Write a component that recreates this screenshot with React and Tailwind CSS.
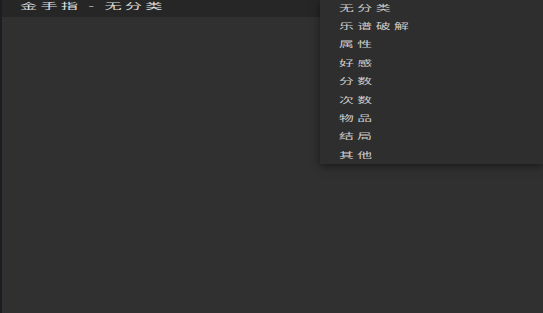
import React from 'react'

const items = ['无分类', '乐谱破解', '属性', '好感', '分数', '次数', '物品', '结局', '其他']

export default function App() {
  return (
    <div
      className="relative w-[543px] h-[313px] overflow-hidden bg-[#303030] flex"
      style={{ fontFamily: '"Noto Sans CJK SC", "Noto Sans", sans-serif' }}
    >
      <div className="w-[2px] bg-[#1c1d22]" />
      <div className="flex-1 flex flex-col">
        <div className="h-[17px] bg-[#262626] flex items-start pl-[18px] pt-[1px]">
          <span className="inline-block origin-top-left scale-x-[1.57] scale-y-[0.72] text-[11px] leading-[12px] tracking-[2px] text-[#dcdcdc] whitespace-nowrap">
            金手指 - 无分类
          </span>
        </div>
        <div className="flex-1" />
      </div>

      <div className="absolute left-[320px] top-0 w-[223px] h-[164px] bg-[#2e2e2e] shadow-[0_2px_8px_rgba(0,0,0,0.5)] pl-[19px]">
        <div className="-mt-[2px] flex flex-col">
          {items.map((t, i) => (
            <div key={i} className="h-[18.4px] flex items-center">
              <span className="inline-block origin-left scale-x-[1.35] scale-y-[0.7] text-[11px] leading-none tracking-[2.6px] text-[#cbcbcb] whitespace-nowrap">
                {t}
              </span>
            </div>
          ))}
        </div>
      </div>
    </div>
  )
}
